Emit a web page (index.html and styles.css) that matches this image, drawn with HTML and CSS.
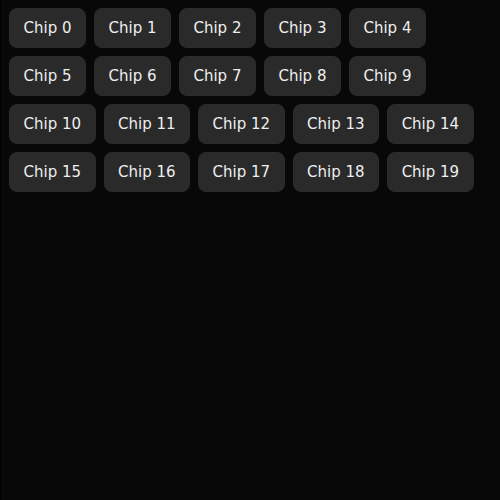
FILE: index.html
```html
<!DOCTYPE html>
<html>
<head>
<meta charset="utf-8">
<link rel="stylesheet" href="styles.css">
</head>
<body>
<div class="chips">
<span class="chip">Chip 0</span>
<span class="chip">Chip 1</span>
<span class="chip">Chip 2</span>
<span class="chip">Chip 3</span>
<span class="chip">Chip 4</span>
<span class="chip">Chip 5</span>
<span class="chip">Chip 6</span>
<span class="chip">Chip 7</span>
<span class="chip">Chip 8</span>
<span class="chip">Chip 9</span>
<span class="chip">Chip 10</span>
<span class="chip">Chip 11</span>
<span class="chip">Chip 12</span>
<span class="chip">Chip 13</span>
<span class="chip">Chip 14</span>
<span class="chip">Chip 15</span>
<span class="chip">Chip 16</span>
<span class="chip">Chip 17</span>
<span class="chip">Chip 18</span>
<span class="chip">Chip 19</span>
</div>
</body>
</html>
```
FILE: styles.css
```css
html {
  background: #000;
  height: 100%;
}
body {
  margin: 0 0 0 1px;
  min-height: 100%;
  background: #080808;
  font-family: "DejaVu Sans", sans-serif;
}
.chips {
  display: flex;
  flex-wrap: wrap;
  gap: 8px;
  padding: 8px;
}
.chip {
  display: inline-block;
  background: #2a2a2a;
  border: 1px solid #2c2c2c;
  color: #eeeeee;
  font-size: 15px;
  line-height: 18px;
  padding: 10px 13.5px;
  border-radius: 8px;
}
```
